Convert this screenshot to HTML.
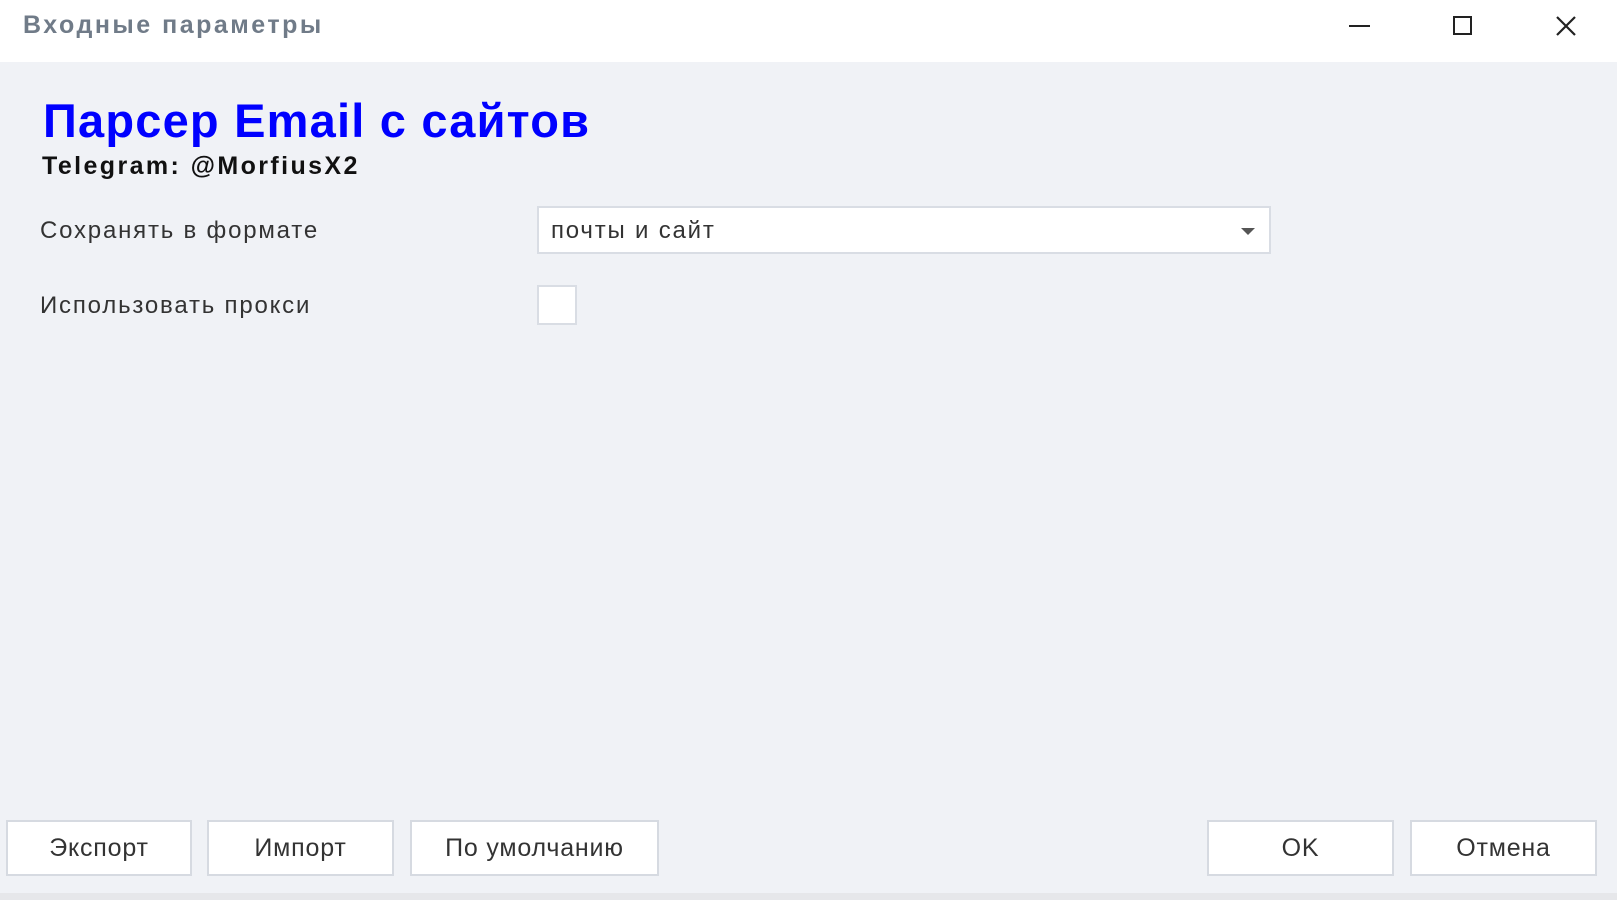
<!DOCTYPE html>
<html><head><meta charset="utf-8"><style>
body{margin:0;width:1617px;height:900px;background:#f0f2f6;font-family:"Liberation Sans",sans-serif;position:relative;overflow:hidden}
.tb{position:absolute;left:0;top:0;width:1617px;height:62px;background:#fff}
.t{position:absolute;left:23px;top:11px;font-size:25px;font-weight:bold;color:#707b88;letter-spacing:2.5px}
.ab{position:absolute}
.h{left:43px;top:93px;font-size:47px;font-weight:bold;color:#0000ff;letter-spacing:1.2px}
.tg{left:42px;top:152px;font-size:25px;font-weight:bold;color:#111;letter-spacing:2.4px}
.l{font-size:24px;color:#333;left:40px;letter-spacing:1.8px}
.box{background:#fff;border:2px solid #d9dde4;box-sizing:border-box}
.btn{position:absolute;top:820px;height:56px;background:#fff;border:2px solid #d6dae1;box-sizing:border-box;font-size:25px;color:#333;display:flex;align-items:center;justify-content:center;letter-spacing:0.8px}
</style></head><body>
<div class="tb"></div>
<div class="t">Входные параметры</div>
<svg class="ab" style="left:1340px;top:12px" width="240" height="26"><line x1="9" y1="14" x2="30" y2="14" stroke="#222" stroke-width="2"/><rect x="114" y="5" width="17" height="17" fill="none" stroke="#222" stroke-width="2"/><path d="M217 5L235 23M235 5L217 23" stroke="#222" stroke-width="2.2"/></svg>
<div class="ab h">Парсер Email с сайтов</div>
<div class="ab tg">Telegram: @MorfiusX2</div>
<div class="ab l" style="top:217px">Сохранять в формате</div>
<div class="ab box" style="left:537px;top:206px;width:734px;height:48px"><span style="position:absolute;left:12px;top:9px;font-size:24px;color:#333;letter-spacing:1.8px">почты и сайт</span><svg style="position:absolute;right:14px;top:20px" width="14" height="8"><path d="M0 0H14L7 7Z" fill="#555"/></svg></div>
<div class="ab l" style="top:292px">Использовать прокси</div>
<div class="ab box" style="left:537px;top:285px;width:40px;height:40px"></div>
<div class="btn" style="left:6px;width:186px">Экспорт</div>
<div class="btn" style="left:207px;width:187px">Импорт</div>
<div class="btn" style="left:410px;width:249px">По умолчанию</div>
<div class="btn" style="left:1207px;width:187px">OK</div>
<div class="btn" style="left:1410px;width:187px">Отмена</div>
<div class="ab" style="left:0;top:893px;width:1617px;height:7px;background:#e6e7ea"></div>
</body></html>
